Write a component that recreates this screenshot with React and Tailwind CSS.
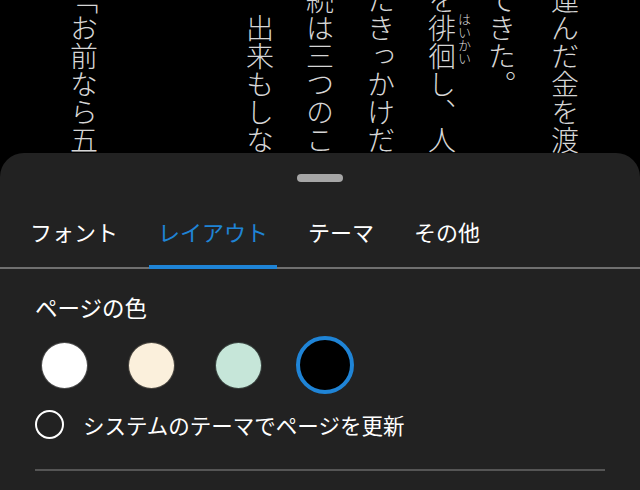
import React from 'react';

const columns = [
  { text: '「お前なら五', className: 'ml-[70px]' },
  { text: '　出来もしな', className: 'ml-[148px]' },
  { text: '続は三つのこ', className: 'ml-[32px]' },
  { text: 'たきっかけだ', className: 'ml-[33px]' },
  { text: 'を徘徊し、人', className: 'ml-[33px]', ruby: 'はいかい' },
  { text: 'てきた。', className: 'ml-[17px]' },
  { text: '運んだ金を渡', className: 'ml-[35px]' },
];

const tabs = ['フォント', 'レイアウト', 'テーマ', 'その他'];

const swatches = [
  { color: 'bg-white' },
  { color: 'bg-[#fbf0dc]' },
  { color: 'bg-[#c6e6d9]' },
  { color: 'bg-black', selected: true },
];

function Column({ col }) {
  return (
    <div className={`flex shrink-0 ${col.className}`}>
      <div className="w-[28px] mt-[-14px] text-[28px] leading-[28px] whitespace-nowrap font-light [writing-mode:vertical-rl]">
        {col.text}
      </div>
      {col.ruby && (
        <div className="ml-[2px] mt-[13px] w-[13px] text-[13px] leading-[13px] whitespace-nowrap font-light [writing-mode:vertical-rl]">
          {col.ruby}
        </div>
      )}
    </div>
  );
}

export default function App() {
  const activeTab = 1;

  return (
    <div className="w-[640px] h-[490px] overflow-hidden bg-black font-['Noto_Sans_CJK_JP',sans-serif]">
      {/* book page behind the sheet */}
      <div className="flex items-start h-[153px] overflow-hidden text-[#d6d6d6]">
        {columns.map((col, i) => (
          <Column key={i} col={col} />
        ))}
      </div>

      {/* settings sheet */}
      <div className="h-[337px] bg-[#222222] rounded-t-[24px] overflow-hidden">
        <div className="mx-auto mt-[21px] w-[46px] h-[8px] rounded-full bg-[#a6a6a6]" />

        <div className="mt-[38px] flex gap-[22px] pl-[21px] border-b-2 border-[#707070]">
          {tabs.map((t, i) => (
            <div
              key={t}
              className={`mb-[-2px] px-[9px] pb-[23px] text-[22px] leading-[22px] border-b-4 ${
                i === activeTab ? 'border-[#1f84d6] text-[#1f84d6]' : 'border-transparent text-white'
              }`}
            >
              {t}
            </div>
          ))}
        </div>

        <div className="px-[35px]">
          <div className="mt-[27px] text-[22.5px] leading-[22px] text-white">ページの色</div>

          <div className="mt-[18px] flex gap-[29px]">
            {swatches.map((s, i) => (
              <div key={i} className="w-[58px] h-[58px] flex items-center justify-center">
                {s.selected ? (
                  <div className={`w-[58px] h-[58px] rounded-full border-4 border-[#1f84d6] ${s.color}`} />
                ) : (
                  <div className={`w-[47px] h-[47px] rounded-full border border-black/70 ${s.color}`} />
                )}
              </div>
            ))}
          </div>

          <div className="mt-[16px] flex items-center gap-[19px]">
            <div className="w-[29px] h-[29px] rounded-full border-2 border-white" />
            <div className="text-[21.5px] leading-[29px] text-white">システムのテーマでページを更新</div>
          </div>

          <div className="mt-[30px] h-[2px] bg-[#555555]" />
        </div>
      </div>
    </div>
  );
}
